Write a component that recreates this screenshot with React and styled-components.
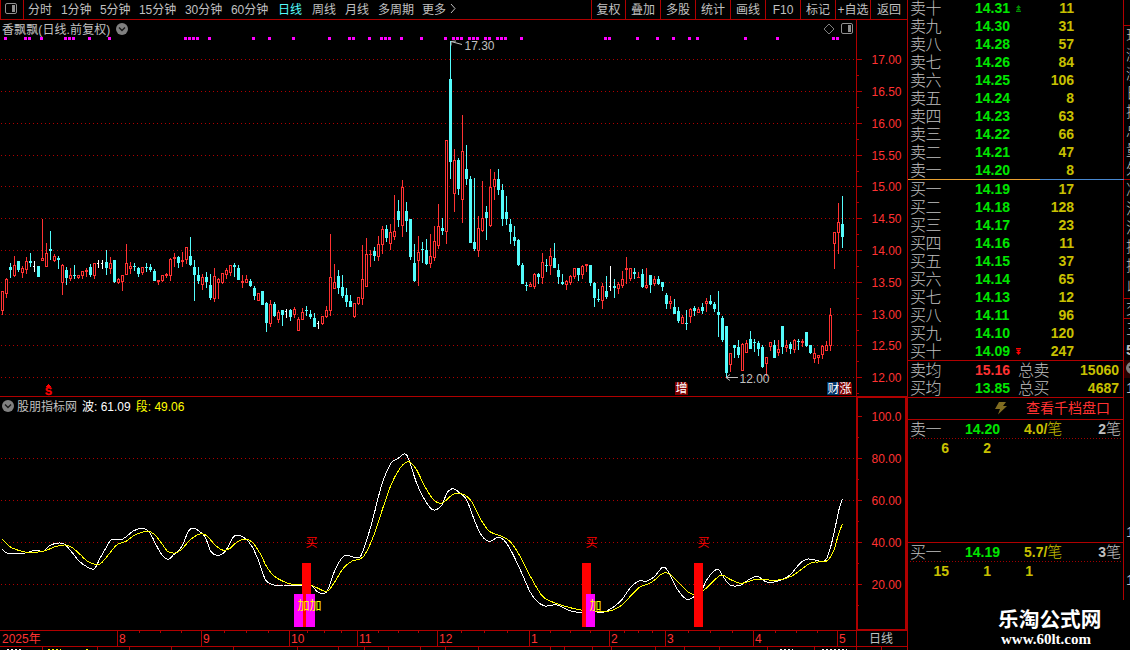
import React, { Fragment } from 'react'
import styled, { createGlobalStyle } from 'styled-components'

const RED = '#b00000'
const UP = '#ff3232'
const DOWN = '#54fcfc'
const GREY = '#c0c0c0'
const SANS = '"Liberation Sans", "Noto Sans CJK SC", sans-serif'

const GlobalStyle = createGlobalStyle`
    body {
        margin: 0;
        background: #000;
        overflow: hidden;
    }
`

const Screen = styled.div`
    display: flex;
    width: 1130px;
    height: 650px;
    overflow: hidden;
    background: #000;
    color: ${GREY};
    font-family: ${SANS};
    font-size: 12px;
    white-space: nowrap;
`

const ChartColumn = styled.div`
    display: flex;
    flex-direction: column;
    width: 907px;
    flex: none;
`

const Toolbar = styled.div`
    display: flex;
    box-sizing: border-box;
    height: 20px;
    flex: none;
    border-bottom: 1px solid ${RED};
    line-height: 20px;
`

const ToggleCell = styled.div`
    display: flex;
    box-sizing: border-box;
    width: 24px;
    height: 19px;
    padding: 3px 0 0 4px;
    border-left: 1px solid ${RED};
    border-right: 1px solid ${RED};
`

const Periods = styled.div`
    display: flex;
    width: 567px;
    padding-left: 4px;
    box-sizing: border-box;
`

const Period = styled.span`
    width: ${props => props.$width}px;
    color: ${props => (props.$active ? DOWN : GREY)};
    letter-spacing: -0.05px;
`

const ToolButton = styled.div`
    box-sizing: border-box;
    width: ${props => props.$width || 35}px;
    height: 19px;
    border-left: 1px solid ${RED};
    text-align: center;
`

const ChartHeader = styled.div`
    display: flex;
    align-items: center;
    box-sizing: border-box;
    width: ${props => 856 + props.$edge}px;
    height: 17px;
    flex: none;
    padding-left: 2px;
    border-right: ${props => props.$edge}px solid ${RED};
`

const IndicatorFrame = styled.div`
    display: flex;
    box-sizing: border-box;
    height: 17px;
    border-right: 2px solid ${RED};
`

const FrameTop = styled.div`
    flex: 1;
    height: 1px;
    background: ${RED};
`

const StockName = styled.span`
    margin-right: 6px;
    letter-spacing: 0.1px;
`

const HeaderIcons = styled.div`
    display: flex;
    align-items: center;
    gap: 6px;
    margin-left: auto;
    margin-right: 3px;
`

const Reading = styled.span`
    margin-left: ${props => props.$gap}px;
    margin-top: -1px;
    color: ${props => props.$color};
`

const Plot = styled.svg`
    display: block;
    flex: none;
    overflow: visible;
`

const PanelLine = styled.div`
    height: 1px;
    flex: none;
    background: ${RED};
`

const DateRow = styled.div`
    display: flex;
    box-sizing: border-box;
    height: 15px;
    flex: none;
    color: ${UP};
    line-height: 16px;
`

const Month = styled.div`
    box-sizing: border-box;
    width: ${props => props.$width}px;
    height: 15px;
    padding-left: ${props => (props.$first ? 2 : 1)}px;
    border-left: ${props => (props.$first ? 'none' : `1px solid ${RED}`)};
    background: ${props => (props.$ticks ? [1, 2, 3].map(n => (
        `linear-gradient(${RED}, ${RED}) ${Math.round(props.$width * n / 4)}px 0 / 1px 2px no-repeat`
    )).join(', ') : 'none')};
`

const PeriodName = styled.div`
    flex: 1;
    padding-left: 12px;
    border-left: 1px solid ${RED};
    color: ${GREY};
`

const BookColumn = styled.div`
    display: flex;
    flex-direction: column;
    box-sizing: border-box;
    width: 217px;
    flex: none;
    border-left: 1px solid ${RED};
`

const BookBody = styled.div`
    display: flex;
    flex-direction: column;
    box-sizing: border-box;
    height: 600px;
    border-right: 1px solid ${RED};
`

const Levels = styled.div`
    height: ${props => props.$height}px;
    margin-top: ${props => props.$offset || 0}px;
`

const LevelRow = styled.div`
    display: flex;
    align-items: center;
    height: 18px;
    padding-left: 2px;
    line-height: 18px;
`

const Label = styled.span`
    width: ${props => props.$width || 65}px;
    padding-top: 2px;
    font-size: 16px;
    font-weight: 300;
    letter-spacing: -0.4px;
`

const Num = styled.span`
    width: ${props => (props.$width ? `${props.$width}px` : 'auto')};
    color: ${props => props.$color || '#c8c000'};
    font-size: 14px;
    font-weight: bold;
    text-align: ${props => props.$align || 'left'};
`

const Unit = styled.span`
    font-size: 15px;
    font-weight: 300;
`

const Marker = styled.span`
    display: flex;
    width: 8px;
    padding-left: 5px;
`

const SplitLine = styled.div`
    height: 1px;
    flex: none;
    margin-right: -1px;
    background: linear-gradient(to right, #e8a030 132px, #4888d0 132px);
`

const DepthLink = styled.div`
    display: flex;
    align-items: center;
    height: 21px;
    padding-left: 86px;
    color: ${UP};
    font-size: 14px;
    line-height: 19px;
`

const LinkText = styled.span`
    margin-left: 18px;
`

const Queue = styled.div`
    height: ${props => props.$height}px;
`

const DottedLine = styled.div`
    height: 1px;
    margin-left: 2px;
    background: repeating-linear-gradient(to right, #a00000 0 1px, transparent 1px 3px);
`

const QueueCells = styled.div`
    display: flex;
    height: 18px;
    margin-left: -1px;
    line-height: 18px;
`

const Watermark = styled.div`
    margin-left: 90px;
    color: #fff;
    font-size: 20.7px;
    font-weight: bold;
    line-height: 36px;
    font-family: "Noto Sans CJK SC", sans-serif;
`

const Site = styled.div`
    margin: -5px 0 0 93px;
    color: #fff;
    font-family: "Liberation Serif", serif;
    font-size: 15px;
    font-weight: bold;
    line-height: 16px;
`

const Strip = styled.div`
    width: 6px;
    overflow: hidden;
    color: ${GREY};
`

const StripCell = styled.div`
    box-sizing: border-box;
    height: ${props => props.$height}px;
    padding-left: 2px;
    border-bottom: ${props => (props.$line ? `1px solid ${RED}` : 'none')};
    background: ${props => (props.$dark ? '#280000' : 'none')};
    font-size: 15px;
    line-height: ${props => props.$height}px;
    font-weight: ${props => (props.$bold ? 'bold' : 300)};
    overflow: hidden;
`

// type, high, body top, body bottom, low; one candle every 4px
const candles = `
r291,291,311,315 r278,279,294,298 c263,267,270,278 r256,265,276,277 c261,261,270,272 r266,268,273,278 r257,261,270,274
c253,261,263,267 w261,266,267,272 c266,266,277,277 r219,258,261,261 r243,253,267,267 c231,249,251,260 r254,256,261,262
c256,258,260,269 r264,265,283,295 c267,270,278,285 r268,275,279,281 c265,275,276,279 r275,275,278,279 r271,271,276,279
r268,270,272,277 c264,267,275,277 r263,263,276,279 w260,263,264,268 w260,263,264,269 c250,262,268,275 r257,263,269,274
c260,260,282,283 r278,279,283,284 r275,275,282,291 r244,263,275,275 r262,266,269,274 c263,266,267,271 c267,268,274,277
r267,267,273,275 c263,267,268,272 c264,267,270,272 c269,271,281,281 r280,280,282,285 r275,275,281,282 r273,274,276,278
r258,259,276,281 r253,257,259,267 c256,257,263,268 r252,260,262,267 r247,247,260,264 c237,256,265,266 c260,267,275,301
c267,275,281,284 r274,277,285,290 c272,277,282,288 c274,285,298,300 r268,276,299,302 r278,279,283,299 r273,273,283,284
r268,270,275,279 r265,265,273,276 c263,265,267,277 c265,268,280,280 r275,281,283,288 r275,279,283,283 c279,281,286,287
c286,288,296,300 r293,293,301,301 c291,291,305,305 c302,303,323,332 r300,304,324,327 c302,304,316,317 r310,312,320,323
c310,310,315,326 w309,311,312,318 c309,310,317,321 r307,309,315,318 r317,319,331,331 r308,312,320,320 c306,310,311,316
c310,314,317,319 c313,318,327,327 w321,323,324,329 r316,316,324,325 r306,310,317,318 r234,277,311,316 r264,282,289,289
c270,276,288,294 c275,287,296,298 c288,295,302,307 c295,301,307,307 r303,303,317,318 r297,297,304,305 r245,279,299,305
r238,254,287,287 r250,254,255,267 c247,251,256,261 r236,244,257,261 r226,229,245,254 c225,229,238,242 r224,232,244,250
r195,231,237,240 c200,211,220,227 r180,187,226,237 c202,211,221,232 c219,219,257,260 c244,263,281,282 r236,252,261,286
c242,249,250,263 c239,250,264,265 r234,256,264,268 r226,241,258,261 r204,226,246,249 c218,228,231,235 r140,140,232,244
c41,79,162,179 r149,160,194,212 c158,160,189,195 r115,151,200,223 c145,169,179,185 c176,179,243,243 c178,242,249,251
r216,228,251,257 r181,218,231,232 c206,212,218,240 r169,187,226,227 r172,179,187,200 c169,179,190,195 c184,190,219,226
c196,212,219,225 c219,224,232,244 c226,237,241,246 c239,240,265,266 c263,265,284,284 c282,285,286,291 r282,284,287,287
r273,274,287,289 c273,274,277,284 r253,262,278,284 c259,265,266,272 r248,256,266,275 c243,258,268,268 c264,270,277,284
c274,282,284,285 r280,281,285,290 r275,276,283,285 r268,268,277,279 c268,268,275,281 r265,266,275,279 r264,264,266,272
c265,265,283,286 c282,283,298,307 c289,299,300,302 r283,286,301,309 c276,291,297,299 w266,286,287,291 c279,286,288,298
r282,284,289,294 r271,279,286,288 r257,268,270,284 r268,268,279,281 c268,272,274,279 r272,277,278,278 c269,274,287,288
r268,285,288,289 c275,275,285,293 r276,279,284,286 c276,279,284,285 c282,282,287,291 c293,295,304,309 r296,301,304,309
c299,307,314,314 c307,311,321,323 r315,317,324,324 c310,323,324,330 r308,309,317,323 c306,308,311,316 r307,309,313,313
c303,307,311,314 r298,301,304,312 c295,301,304,305 c302,304,309,312 c291,312,315,337 c316,318,340,342 c326,326,373,378
r353,353,365,372 c345,345,348,358 c340,347,355,358 r343,344,371,371 r340,343,353,353 c331,339,349,349 c339,342,343,352
c341,343,349,356 c345,347,367,368 r357,357,364,376 r342,342,347,351 c340,345,358,358 r340,349,353,356 c326,326,347,354
r340,345,348,352 c342,344,349,354 r339,340,350,353 c339,341,342,350 r339,341,343,347 c332,332,346,347 c345,345,353,354
r348,353,359,363 r355,355,358,364 r345,346,355,359 r341,345,351,351 r308,315,346,351 r232,232,244,269 r203,222,233,254
c196,224,237,248`.trim().split(/\s+/).map(item => [item[0], ...item.slice(1).split(',').map(Number)])

const signals = [
    4, 24, 28, 40, 64, 68, 72, 88, 108, 184, 188, 192, 196, 208, 252, 268, 292, 328, 348, 352, 368, 380, 384, 388, 400,
    420, 444, 452, 456, 460, 468, 472, 476, 484, 488, 496, 500, 504, 520, 604, 608, 636, 656, 672, 688, 696, 744, 776,
    832, 836
]

const prices = [
    ['17.00', 59], ['16.50', 91], ['16.00', 123], ['15.50', 155], ['15.00', 186], ['14.50', 218],
    ['14.00', 250], ['13.50', 282], ['13.00', 314], ['12.50', 345], ['12.00', 377]
]

const scale = [['100.0', 416], ['80.00', 458], ['60.00', 500], ['40.00', 542], ['20.00', 584]]

const waveLine = `2.3,549 7.3,553 23.3,553.3 35,550.3 43.3,551.3 50,545.3 59.3,543 65,544.7 71.7,552 79,561 87.3,567
94.3,568.7 100,558.3 106.7,546.7 111.3,540 122.7,539 133.3,531 143.3,528.3 150,533.3 156.7,546 162.7,556 168.3,559.3
173.3,555 181.7,546.7 188.3,531.3 193.3,528 198.3,530.7 205,536.7 210.7,551 217.3,555.3 225,551.7 233.3,537
238.3,535.3 245,538.3 251.7,546 258.3,560 265.7,580 275,585.3 283.3,586 290,585.7 301.7,585.7 311.7,586 317.3,591.7
323.3,593.3 327.7,590 335,570 341.7,558.3 346.7,555.3 358.3,557.7 363.3,550 371.7,523.3 381.7,485 391,463.3
398.3,458.3 403.3,454.3 406.7,455 410.7,465 416.7,483.3 423.3,497.3 430.7,508.3 435,510 441.7,505.3 446.7,493.3
450.7,489.3 455,489.3 460,493.3 466.7,500 475,521.7 481.7,535.7 489.3,541.3 498.3,537.3 505,541.3 513.3,555
523.3,576.7 530,591.7 536.7,601 545,606 556.7,605 570,610.7 580,612.3 590,610 598.3,612.3 606.7,611 620,601.7
630,588.3 638.3,581.3 646.7,581 654.3,576.7 662.7,567.3 668.3,571.7 676.7,588.3 686.7,599.3 695,596 701.7,590
706.7,580 713.3,571.7 718.3,569.3 723.3,576.7 730,585 740,585.3 748.3,580 757.3,576.3 766.7,582 778.3,581 790,575
800,563.3 808.3,559 821.7,561.3 826.7,558.3 830.7,546.7 835,528.3 839.3,508.3 842.3,499`

const segmentLine = `2.3,539 10,546.7 16.7,549.7 26.7,552.3 43.3,551.3 55,546.7 65,545 71.7,547.3 80,554.3 87.3,561
98.3,564.7 105,559 116.7,545 126,541.3 135,535 146.7,531.3 154,534 161.7,543.3 167.3,551 175,553 181.7,549.3 190,540
200,534 206.7,535.7 215,545 223.3,550.3 230,548.3 236.7,542.3 245,539 252.3,542.3 260,553.3 266.7,566.7 275,576.7
291.7,584.3 310,585 326,591.3 333.3,584 343.3,568.3 351.7,561.3 363.3,556.7 373.3,536.7 383.3,506.7 391.7,483.3
400,468.3 406,462.3 410.7,462.7 416.7,470 425,486.7 434,500.3 442.3,503 453.3,494.3 463.3,494.3 471.7,501.7
481.7,521 490,531.7 502.7,536.7 510.7,542.3 520,556 530,575.7 541.7,595.3 550,601 566.7,606.7 583.3,610.3
606.7,611.3 615,609 622.3,604.7 639,587.7 651,582.7 661.7,574 666.7,573 671.7,575.7 681.7,585.7 688.3,592
695,594.7 703.3,590.7 711.7,582.7 719.3,576 723.3,575.3 730,579.3 741.7,583.3 756.7,579.3 776.7,580.3 791.7,576
810,563.3 818.3,562 826.7,561 833.3,551.7 838.3,535 842.3,524`

const periods = [
    ['分时', 33], ['1分钟', 39], ['5分钟', 39], ['15分钟', 46], ['30分钟', 46], ['60分钟', 47], ['日线', 34],
    ['周线', 33], ['月线', 33], ['多周期', 44], ['更多', 27]
]

const tools = ['复权', '叠加', '多股', '统计', '画线', 'F10', '标记', '+自选', '返回']

const months = [
    ['2025年', 117], ['8', 84], ['9', 88], ['10', 68], ['11', 80], ['12', 92], ['1', 80], ['2', 56], ['3', 88],
    ['4', 84], ['5', 19]
]

const lowerTicks = [42, 97, 129, 171, 233, 297, 338, 364, 388, 420, 445, 478, 550, 564, 592, 611, 655, 684, 719, 767, 814, 856, 881]

const asks = [
    ['卖十', '14.31', 11], ['卖九', '14.30', 31], ['卖八', '14.28', 57], ['卖七', '14.26', 84], ['卖六', '14.25', 106],
    ['卖五', '14.24', 8], ['卖四', '14.23', 63], ['卖三', '14.22', 66], ['卖二', '14.21', 47], ['卖一', '14.20', 8]
]

const bids = [
    ['买一', '14.19', 17], ['买二', '14.18', 128], ['买三', '14.17', 23], ['买四', '14.16', 11], ['买五', '14.15', 37],
    ['买六', '14.14', 65], ['买七', '14.13', 12], ['买八', '14.11', 96], ['买九', '14.10', 120], ['买十', '14.09', 247]
]

// turns a list of points into a smooth path
function smooth(points) {
    const p = points.trim().split(/\s+/).map(pair => pair.split(',').map(Number))
    let d = `M${p[0]}`
    for (let i = 0; i < p.length - 1; i++) {
        const a = p[i - 1] || p[i]
        const b = p[i]
        const c = p[i + 1]
        const e = p[i + 2] || c
        d += `C${b[0] + (c[0] - a[0]) / 6} ${b[1] + (c[1] - a[1]) / 6} ${c[0] - (e[0] - b[0]) / 6} ${c[1] - (e[1] - b[1]) / 6} ${c[0]} ${c[1]}`
    }
    return d
}

function Candle({ x, data }) {
    const [type, high, top, bottom, low] = data
    const color = type === 'r' ? UP : type === 'c' ? DOWN : '#fff'
    const height = Math.max(1, bottom - top)
    if (type === 'r' && height > 2) {
        return (
            <g fill={color}>
                <rect x={x} y={high} width="1" height={top - high} />
                <rect x={x - 0.5} y={top + 0.5} width="2" height={height - 1} fill="none" stroke={color} />
                <rect x={x} y={bottom} width="1" height={low - bottom} />
            </g>
        )
    }
    return (
        <g fill={color}>
            <rect x={x} y={high} width="1" height={low - high} />
            <rect x={x - 1} y={top} width={type === 'w' ? 1 : 3} height={height} />
        </g>
    )
}

function Grid({ rows }) {
    return rows.map(y => (
        <line key={y} x1="1" x2="856" y1={y + 0.5} y2={y + 0.5} stroke={RED} strokeDasharray="1 3" />
    ))
}

function Axis({ labels, half }) {
    return labels.map(([text, y]) => (
        <g key={text}>
            <rect x="857" y={y} width="5" height="1" fill={RED} />
            <rect x="857" y={y + half} width="2" height="1" fill={RED} />
            <text x="871.5" y={y + 5} fill={UP} fontSize="13" textLength="30" lengthAdjust="spacingAndGlyphs">{text}</text>
        </g>
    ))
}

function Badge({ x, color, text }) {
    return (
        <g>
            <path d={`M${x} 382h11l2 2v11h-13z`} fill={color} />
            <text x={x + 0.5} y="393" fill="#fff" fontSize="12">{text}</text>
        </g>
    )
}

function DropIcon() {
    return (
        <svg width="12" height="12" viewBox="0 0 12 12">
            <circle cx="6" cy="6" r="6" fill="#808080" />
            <path d="M3 4.5l3 3 3-3" fill="none" stroke="#181818" strokeWidth="1.4" />
        </svg>
    )
}

function PanelIcon() {
    return (
        <svg width="12" height="12" viewBox="0 0 12 12">
            <rect x="0.5" y="0.5" width="11" height="10" rx="1.5" fill="none" stroke="#909090" />
            <rect x="7" y="2" width="3" height="7" fill="#909090" />
        </svg>
    )
}

function PriceChart() {
    return (
        <Plot width="907" height="359" viewBox="0 37 907 359" fontFamily={SANS}>
            <g shapeRendering="crispEdges">
                <Grid rows={prices.map(row => row[1])} />
                {signals.map(x => <rect key={x} x={x} y="37" width="3" height="3" fill="#f0f" />)}
                {candles.map((data, i) => <Candle key={i} x={2 + i * 4} data={data} />)}
                <rect x="856" y="37" width="1" height="359" fill={RED} />
            </g>
            <Axis labels={prices} half={16} />
            <g fill="none" stroke={GREY}>
                <path d="M451 41.5l11 3M451 41.5v4M451 41.5l5-.5" />
                <path d="M726 377.5h12M730 374.5l-4 3 4 3" />
            </g>
            <text x="464.5" y="50" fill={GREY} fontSize="13" textLength="30" lengthAdjust="spacingAndGlyphs">17.30</text>
            <text x="739.5" y="383" fill={GREY} fontSize="13" textLength="30" lengthAdjust="spacingAndGlyphs">12.00</text>
            <path d="M48 384h1v1h1v1h1v1h-5v-1h1v-1h1z" fill="#f00" shapeRendering="crispEdges" />
            <text x="45" y="395" fill="#f00" stroke="#f00" strokeWidth="0.3" fontSize="10.5" fontWeight="bold">S</text>
            <Badge x={675} color="#800000" text="增" />
            <Badge x={827} color="#003468" text="财" />
            <Badge x={839} color="#800000" text="涨" />
        </Plot>
    )
}

function IndicatorChart() {
    return (
        <Plot width="907" height="216" viewBox="0 414 907 216" fontFamily={SANS}>
            <g shapeRendering="crispEdges">
                <Grid rows={[458, 500, 542, 584]} />
                <path d={smooth(waveLine)} fill="none" stroke="#fff" />
                <path d={smooth(segmentLine)} fill="none" stroke="#ff0" />
                <rect x="294" y="594" width="21" height="33" fill="#f0f" />
                <rect x="302" y="563" width="9" height="31" fill="#f00" />
                <rect x="303" y="594" width="3" height="33" fill="#f00" />
                <rect x="582" y="563" width="9" height="64" fill="#f00" />
                <rect x="586" y="594" width="9" height="33" fill="#f0f" />
                <rect x="694" y="563" width="9" height="64" fill="#f00" />
                <path d="M857 414v216M906 414v216" stroke={RED} strokeWidth="2" />
                <rect x="856" y="629" width="51" height="1" fill={RED} />
            </g>
            <Axis labels={scale} half={21} />
            <g fill="#ff0" fontSize="12">
                <text x="297.5" y="609.5">加加</text>
                <text x="589.5" y="609.5">加</text>
            </g>
            <g fill="#f00" fontSize="12">
                <text x="305.5" y="546.5">买</text>
                <text x="585.5" y="546.5">买</text>
                <text x="697.5" y="546.5">买</text>
            </g>
        </Plot>
    )
}

function Level({ row, marker }) {
    return (
        <LevelRow>
            <Label>{row[0]}</Label>
            <Num $width={36} $color="#00e600">{row[1]}</Num>
            <Marker>
                {marker === 'up' && (
                    <svg width="5" height="7" viewBox="0 0 5 7"><path d="M2.5 0L5 3H0zM2.5 2.5L5 5.500H0zM0 6h5v1H0z" fill="#009000" /></svg>
                )}
                {marker === 'down' && (
                    <svg width="5" height="7" viewBox="0 0 5 7"><path d="M0 0h5v1H0zM0 1.500h5L2.500 4.500zM0 4h5L2.500 7z" fill="#f00" /></svg>
                )}
            </Marker>
            <Num $width={50} $align="right">{row[2]}</Num>
        </LevelRow>
    )
}

function Average({ label, price, color, total, amount }) {
    return (
        <LevelRow>
            <Label>{label}</Label>
            <Num $width={43} $color={color}>{price}</Num>
            <Label $width={38}>{total}</Label>
            <Num $width={63} $align="right">{amount}</Num>
        </LevelRow>
    )
}

function QueueBlock({ label, price, mean, count, cells, height }) {
    return (
        <Queue $height={height}>
            <LevelRow>
                <Label $width={55}>{label}</Label>
                <Num $width={59} $color="#00e600">{price}</Num>
                <Num $width={50}>{mean}/<Unit>笔</Unit></Num>
                <Num $width={47} $color={GREY} $align="right">{count}<Unit>笔</Unit></Num>
            </LevelRow>
            <DottedLine />
            <QueueCells>
                {cells.map((cell, i) => <Num key={i} $width={42} $align="right">{cell}</Num>)}
            </QueueCells>
        </Queue>
    )
}

export default function App() {
    return (
        <Fragment>
            <GlobalStyle />
            <Screen>
                <ChartColumn>
                    <Toolbar>
                        <ToggleCell><PanelIcon /></ToggleCell>
                        <Periods>
                            {periods.map(([text, width]) => (
                                <Period key={text} $width={width} $active={text === '日线'}>{text}</Period>
                            ))}
                            <svg width="8" height="18" viewBox="0 0 8 18"><path d="M2 4l4 4.500-4 4.500" fill="none" stroke={GREY} /></svg>
                        </Periods>
                        {tools.map((text, i) => (
                            <ToolButton key={text} $width={i === 0 ? 34 : i === 8 ? 37 : 35}>{text}</ToolButton>
                        ))}
                    </Toolbar>
                    <ChartHeader $edge={1}>
                        <StockName>香飘飘(日线.前复权)</StockName>
                        <DropIcon />
                        <HeaderIcons>
                            <svg width="12" height="12" viewBox="0 0 12 12"><path d="M6 1l5 5-5 5-5-5z" fill="none" stroke="#808080" /></svg>
                            <PanelIcon />
                        </HeaderIcons>
                    </ChartHeader>
                    <PriceChart />
                    <PanelLine />
                    <IndicatorFrame>
                        <ChartHeader $edge={2}>
                            <DropIcon />
                            <Reading $gap={3} $color={GREY}>股朋指标网</Reading>
                            <Reading $gap={5} $color="#fff">波: 61.09</Reading>
                            <Reading $gap={5} $color="#ff0">段: 49.06</Reading>
                        </ChartHeader>
                        <FrameTop />
                    </IndicatorFrame>
                    <IndicatorChart />
                    <PanelLine />
                    <DateRow>
                        {months.map(([text, width], i) => (
                            <Month key={text} $width={width} $first={i === 0} $ticks={i > 0 && i < 10}>{text}</Month>
                        ))}
                        <PeriodName>日线</PeriodName>
                    </DateRow>
                    <PanelLine />
                    <Plot width="907" height="3" viewBox="0 0 907 3" shapeRendering="crispEdges">
                        {lowerTicks.map(x => <rect key={x} x={x} y="0" width="1" height="3" fill={RED} />)}
                        <path d="M7 2.500h15M780 2.500h13M822 2.500h25" stroke="#fff" strokeDasharray="2 2" />
                        <path d="M48 2.500h13M86 2.500h2" stroke="#ff0" strokeDasharray="2 2" />
                    </Plot>
                </ChartColumn>
                <BookColumn>
                    <BookBody>
                        <Levels $height={180} $offset={-1}>
                            {asks.map((row, i) => <Level key={row[0]} row={row} marker={i === 0 ? 'up' : ''} />)}
                        </Levels>
                        <SplitLine />
                        <Levels $height={180}>
                            {bids.map((row, i) => <Level key={row[0]} row={row} marker={i === 9 ? 'down' : ''} />)}
                        </Levels>
                        <PanelLine />
                        <Levels $height={36}>
                            <Average label="卖均" price="15.16" color={UP} total="总卖" amount="15060" />
                            <Average label="买均" price="13.85" color="#00e600" total="总买" amount="4687" />
                        </Levels>
                        <PanelLine />
                        <DepthLink>
                            <svg width="14" height="13" viewBox="0 0 14 13"><path d="M5 0h7L9 4h4L4 12.500 6 7H1z" fill="#806c20" /></svg>
                            <LinkText>查看千档盘口</LinkText>
                        </DepthLink>
                        <PanelLine />
                        <QueueBlock label="卖一" price="14.20" mean="4.0" count={2} cells={[6, 2]} height={122} />
                        <PanelLine />
                        <QueueBlock label="买一" price="14.19" mean="5.7" count={3} cells={[15, 1, 1]} height={57} />
                    </BookBody>
                    <Watermark>乐淘公式网</Watermark>
                    <Site>www.60lt.com</Site>
                </BookColumn>
                <Strip>
                    <StripCell $height={26} $line />
                    {['现', '涨', '涨', '日', '换', '总', '量', '外'].map((text, i) => (
                        <StripCell key={i} $height={19}>{text}</StripCell>
                    ))}
                    <StripCell $height={2} $line />
                    {['净', '流', '流', '换', '换', '以'].map((text, i) => (
                        <StripCell key={i} $height={i === 5 ? 24 : 19} $line={i === 5}>{text}</StripCell>
                    ))}
                    <StripCell $height={20} $line>交</StripCell>
                    <StripCell $height={20}>三</StripCell>
                    <StripCell $height={21} $bold>5</StripCell>
                    <StripCell $height={18} $dark><DropIcon /></StripCell>
                    <StripCell $height={20}>1</StripCell>
                    <StripCell $height={124} />
                    <StripCell $height={20}>1</StripCell>
                    <StripCell $height={28} />
                    <StripCell $height={20}>1</StripCell>
                </Strip>
            </Screen>
        </Fragment>
    )
}
